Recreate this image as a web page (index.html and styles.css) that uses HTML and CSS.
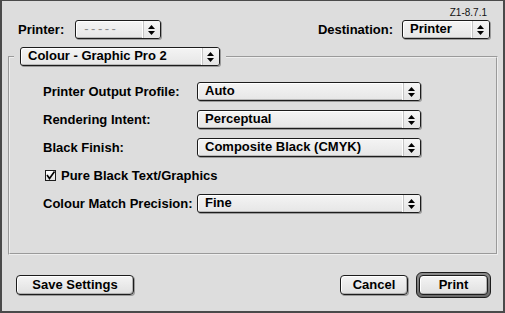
FILE: index.html
```html
<!DOCTYPE html>
<html>
<head>
<meta charset="utf-8">
<link rel="stylesheet" href="styles.css">
</head>
<body>
<div class="dialog">
  <div class="version">Z1-8.7.1</div>
  <div class="toprow">
    <div class="field field-printer">
      <span class="label">Printer:</span>
      <div class="popup popup-printer">
        <span class="ptext ptext-disabled">-----</span>
        <span class="parrow"><svg width="7" height="10" viewBox="0 0 7 10"><path d="M3.5 0 L7 4 L0 4 Z M0 6 L7 6 L3.5 10 Z" fill="#000"/></svg></span>
      </div>
    </div>
    <div class="field field-dest">
      <span class="label">Destination:</span>
      <div class="popup popup-dest">
        <span class="ptext">Printer</span>
        <span class="parrow"><svg width="7" height="10" viewBox="0 0 7 10"><path d="M3.5 0 L7 4 L0 4 Z M0 6 L7 6 L3.5 10 Z" fill="#000"/></svg></span>
      </div>
    </div>
  </div>
  <fieldset class="group">
    <legend class="group-legend">
      <div class="popup popup-group">
        <span class="ptext">Colour - Graphic Pro 2</span>
        <span class="parrow"><svg width="7" height="10" viewBox="0 0 7 10"><path d="M3.5 0 L7 4 L0 4 Z M0 6 L7 6 L3.5 10 Z" fill="#000"/></svg></span>
      </div>
    </legend>
    <div class="rows">
      <span class="label">Printer Output Profile:</span>
      <div class="popup popup-row">
        <span class="ptext">Auto</span>
        <span class="parrow"><svg width="7" height="10" viewBox="0 0 7 10"><path d="M3.5 0 L7 4 L0 4 Z M0 6 L7 6 L3.5 10 Z" fill="#000"/></svg></span>
      </div>
      <span class="label">Rendering Intent:</span>
      <div class="popup popup-row">
        <span class="ptext">Perceptual</span>
        <span class="parrow"><svg width="7" height="10" viewBox="0 0 7 10"><path d="M3.5 0 L7 4 L0 4 Z M0 6 L7 6 L3.5 10 Z" fill="#000"/></svg></span>
      </div>
      <span class="label">Black Finish:</span>
      <div class="popup popup-row">
        <span class="ptext">Composite Black (CMYK)</span>
        <span class="parrow"><svg width="7" height="10" viewBox="0 0 7 10"><path d="M3.5 0 L7 4 L0 4 Z M0 6 L7 6 L3.5 10 Z" fill="#000"/></svg></span>
      </div>
      <div class="check-row">
        <span class="checkbox"><svg width="11" height="11" viewBox="0 0 11 11"><path d="M2 5 L4.5 8.5 L9.5 1.5" fill="none" stroke="#000" stroke-width="1.6"/></svg></span>
        <span class="label">Pure Black Text/Graphics</span>
      </div>
      <span class="label">Colour Match Precision:</span>
      <div class="popup popup-row">
        <span class="ptext">Fine</span>
        <span class="parrow"><svg width="7" height="10" viewBox="0 0 7 10"><path d="M3.5 0 L7 4 L0 4 Z M0 6 L7 6 L3.5 10 Z" fill="#000"/></svg></span>
      </div>
    </div>
  </fieldset>
  <div class="buttons">
    <div class="btn btn-save">Save Settings</div>
    <div class="btn-group">
      <div class="btn btn-cancel">Cancel</div>
      <div class="default-ring"><div class="btn btn-print">Print</div></div>
    </div>
  </div>
</div>
</body>
</html>
```
FILE: styles.css
```css
html, body {
  margin: 0;
  padding: 0;
  background: #dddddd;
}
.dialog {
  width: 505px;
  height: 313px;
  box-sizing: border-box;
  background: #dddddd;
  border-style: solid;
  border-color: #4a4a4a;
  border-width: 1px 2px 2px 2px;
  font-family: "Liberation Sans", Arial, sans-serif;
  font-weight: bold;
  font-size: 13px;
  color: #000;
  overflow: hidden;
}
.version {
  margin-top: 7px;
  height: 12px;
  line-height: 10px;
  font-size: 10px;
  font-weight: normal;
  text-align: right;
  padding-right: 16px;
  color: #111;
}
.toprow {
  display: flex;
  justify-content: space-between;
  align-items: center;
  padding: 0 13px 0 16px;
  height: 19px;
}
.field {
  display: flex;
  align-items: center;
}
.field-printer { gap: 11px; }
.field-dest { gap: 9px; }
.label {
  line-height: 16px;
  white-space: nowrap;
}
.popup {
  box-sizing: border-box;
  height: 19px;
  border: 1px solid #1c1c1c;
  border-radius: 3px;
  background: linear-gradient(#f4f4f4, #e6e6e6);
  box-shadow: 1px 1px 0 #9a9a9a, inset 1px 1px 0 #ffffff, inset -1px -1px 0 #b8b8b8;
  display: flex;
  align-items: stretch;
}
.ptext {
  flex: 1;
  line-height: 16px;
  padding-left: 7px;
  white-space: nowrap;
  overflow: hidden;
}
.ptext-disabled {
  color: #8c8c8c;
  font-weight: normal;
  letter-spacing: 2.5px;
  padding-left: 8px;
}
.parrow {
  width: 17px;
  flex: none;
  display: flex;
  align-items: center;
  justify-content: center;
  border-left: 1px solid #ffffff;
  box-shadow: inset 1px 0 0 #c4c4c4;
  background: linear-gradient(#f6f6f6, #e4e4e4);
  border-radius: 0 2px 2px 0;
}
.popup-printer { width: 86px; }
.popup-dest { width: 88px; }
.popup-group { width: 200px; }
.popup-row { width: 224px; }

.group {
  margin: 8px 5px 0 6px;
  padding: 0 0 40px 4px;
  border: 2px groove #eeeeee;
  min-inline-size: 0;
}
.group-legend {
  padding: 0 6px;
}
.rows {
  display: grid;
  grid-template-columns: 154px 224px;
  grid-auto-rows: 19px;
  row-gap: 9px;
  align-items: center;
  margin-top: 16px;
  margin-left: 29px;
}
.check-row {
  grid-column: 1 / span 2;
  display: flex;
  align-items: center;
  gap: 5px;
  padding-left: 2px;
}
.checkbox {
  width: 11px;
  height: 11px;
  box-sizing: border-box;
  border: 1px solid #1c1c1c;
  background: linear-gradient(#ffffff, #e2e2e2);
  display: flex;
  overflow: visible;
  position: relative;
}
.checkbox svg {
  position: absolute;
  left: -1px;
  top: -1px;
}
.buttons {
  margin-top: 17px;
  display: flex;
  justify-content: space-between;
  align-items: center;
  padding: 0 12px 0 14px;
}
.btn-group {
  display: flex;
  align-items: center;
  gap: 8px;
}
.btn {
  box-sizing: border-box;
  height: 20px;
  line-height: 17px;
  text-align: center;
  border: 1px solid #1c1c1c;
  border-radius: 4px;
  background: linear-gradient(#f4f4f4, #e0e0e0);
  box-shadow: 1px 1px 0 #9a9a9a, inset 1px 1px 0 #ffffff, inset -1px -1px 0 #b0b0b0;
}
.btn-save { width: 118px; }
.btn-cancel { width: 68px; }
.default-ring {
  box-sizing: border-box;
  width: 75px;
  height: 26px;
  padding: 2px;
  border: 1px solid #1c1c1c;
  border-radius: 6px;
  background: linear-gradient(#8c8c8c, #6a6a6a);
}
.btn-print {
  width: 69px;
  box-shadow: inset 1px 1px 0 #ffffff, inset -1px -1px 0 #b0b0b0;
}
```
